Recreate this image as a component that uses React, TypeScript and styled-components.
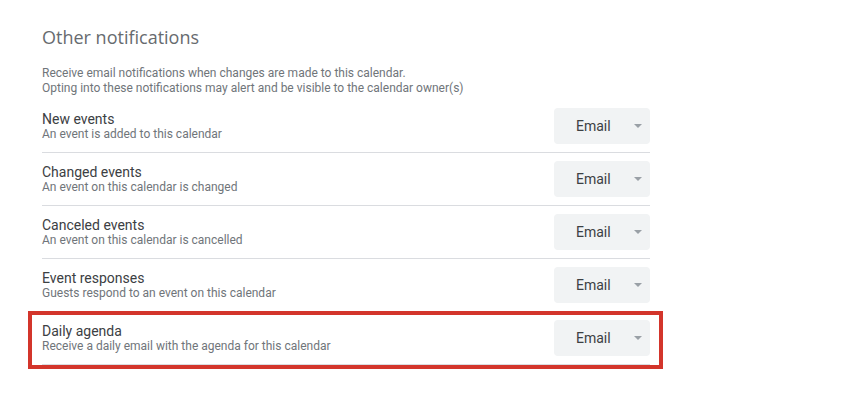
import React from 'react';
import styled, { createGlobalStyle } from 'styled-components';

const GlobalStyle = createGlobalStyle`
  body {
    margin: 0;
    background: #ffffff;
    font-family: Roboto, "Liberation Sans", Arial, sans-serif;
  }
`;

const Page = styled.div`
  padding: 25px 0 40px 42px;
  width: 608px;
`;

const Title = styled.h2`
  margin: 0;
  font-family: "Open Sans", Roboto, sans-serif;
  font-size: 18px;
  line-height: 24px;
  font-weight: 400;
  color: #676b6f;
`;

const Description = styled.p`
  margin: 17px 0 4px;
  font-size: 12px;
  line-height: 15px;
  color: #70757a;
`;

const Row = styled.div<{ $highlight?: boolean }>`
  position: relative;
  display: flex;
  align-items: center;
  justify-content: space-between;
  padding: 8px 0;
  border-bottom: 1px solid #dadce0;

  ${props => props.$highlight && `
    &::after {
      content: '';
      position: absolute;
      left: -14px;
      right: -13px;
      top: -1px;
      bottom: -5px;
      border: 4px solid #d3352b;
      pointer-events: none;
    }
  `}
`;

const RowText = styled.div`
  display: flex;
  flex-direction: column;
`;

const RowTitle = styled.span`
  font-size: 14px;
  line-height: 16px;
  color: #3c4043;
`;

const RowSub = styled.span`
  font-size: 12px;
  line-height: 14px;
  color: #70757a;
`;

const Select = styled.button`
  display: flex;
  align-items: center;
  justify-content: space-between;
  width: 96px;
  height: 36px;
  padding: 0 8px 0 22px;
  border: none;
  border-radius: 4px;
  background: #f1f3f4;
  font-family: Roboto, "Liberation Sans", Arial, sans-serif;
  font-size: 14px;
  color: #3c4043;
  cursor: pointer;
`;

const Arrow = styled.span`
  width: 0;
  height: 0;
  border-left: 4px solid transparent;
  border-right: 4px solid transparent;
  border-top: 4px solid #9aa0a6;
`;

const rows = [
  { title: 'New events', sub: 'An event is added to this calendar' },
  { title: 'Changed events', sub: 'An event on this calendar is changed' },
  { title: 'Canceled events', sub: 'An event on this calendar is cancelled' },
  { title: 'Event responses', sub: 'Guests respond to an event on this calendar' },
  { title: 'Daily agenda', sub: 'Receive a daily email with the agenda for this calendar', highlight: true },
];

const App: React.FC = () => {
  return (
    <>
      <GlobalStyle />
      <Page>
        <Title>Other notifications</Title>
        <Description>
          Receive email notifications when changes are made to this calendar.
          <br />
          Opting into these notifications may alert and be visible to the calendar owner(s)
        </Description>
        {rows.map(row => (
          <Row key={row.title} $highlight={row.highlight}>
            <RowText>
              <RowTitle>{row.title}</RowTitle>
              <RowSub>{row.sub}</RowSub>
            </RowText>
            <Select>
              Email
              <Arrow />
            </Select>
          </Row>
        ))}
      </Page>
    </>
  );
};

export default App;
